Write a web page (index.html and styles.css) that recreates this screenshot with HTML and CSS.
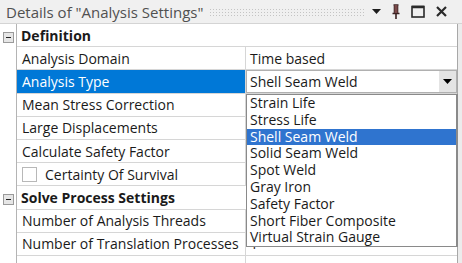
FILE: index.html
```html
<!DOCTYPE html>
<html lang="en">
<head>
  <meta charset="UTF-8">
  <title>Details of "Analysis Settings"</title>
  <link rel="stylesheet" href="styles.css">
</head>
<body>

  <div class="details-panel">
    <div class="title-bar">
      <span class="title">Details of "Analysis Settings"</span>
      <span class="grip"></span>
      <span class="tool-icons">
        <svg width="9" height="6" viewBox="0 0 9 6"><path d="M0 0 H9 L4.5 5 Z" fill="#1e1e1e"/></svg>
        <svg width="8" height="15" viewBox="0 0 8 15"><path d="M1.5 1 H6.5 M2.5 1 V9 M5.5 1 V9 M0.5 9.5 H7.5 M4 10 V15" stroke="#3a2222" stroke-width="1.6" fill="none"/><rect x="2.5" y="1" width="3" height="8" fill="#7a4a4a"/></svg>
        <svg width="14" height="13" viewBox="0 0 14 13"><rect x="1" y="1.5" width="12" height="10.5" fill="none" stroke="#2a2a2a" stroke-width="1.6"/><path d="M1 2 H13" stroke="#2a2a2a" stroke-width="2.5"/></svg>
        <svg width="11" height="11" viewBox="0 0 11 11"><path d="M1 1 L10 10 M10 1 L1 10" stroke="#2a2a2a" stroke-width="2.2"/></svg>
      </span>
    </div>

    <div class="grid">
      <div class="row category">
        <span class="gutter"><span class="toggle"></span></span>
        <span class="cell wide">Definition</span>
      </div>
      <div class="row">
        <span class="gutter"></span>
        <span class="cell name">Analysis Domain</span>
        <span class="cell value">Time based</span>
      </div>
      <div class="row selected">
        <span class="gutter"></span>
        <span class="cell name">Analysis Type</span>
        <span class="cell value">
          <span class="combo">
            <span class="combo-text">Shell Seam Weld</span>
            <span class="combo-button"><svg width="9" height="5" viewBox="0 0 9 5"><path d="M0 0 H9 L4.5 5 Z" fill="#000"/></svg></span>
          </span>
        </span>
      </div>
      <div class="row">
        <span class="gutter"></span>
        <span class="cell name">Mean Stress Correction</span>
        <span class="cell value"></span>
      </div>
      <div class="row">
        <span class="gutter"></span>
        <span class="cell name">Large Displacements</span>
        <span class="cell value"></span>
      </div>
      <div class="row">
        <span class="gutter"></span>
        <span class="cell name">Calculate Safety Factor</span>
        <span class="cell value"></span>
      </div>
      <div class="row">
        <span class="gutter"></span>
        <span class="cell name"><span class="checkbox"></span>Certainty Of Survival</span>
        <span class="cell value"></span>
      </div>
      <div class="row category">
        <span class="gutter"><span class="toggle"></span></span>
        <span class="cell wide">Solve Process Settings</span>
      </div>
      <div class="row">
        <span class="gutter"></span>
        <span class="cell name">Number of Analysis Threads</span>
        <span class="cell value"></span>
      </div>
      <div class="row">
        <span class="gutter"></span>
        <span class="cell name">Number of Translation Processes</span>
        <span class="cell value">1</span>
      </div>
      <div class="row">
        <span class="gutter"></span>
        <span class="cell name"></span>
        <span class="cell value"></span>
      </div>
    </div>

    <!-- lista aberta do combo -->
    <ul class="dropdown-list">
      <li>Strain Life</li>
      <li>Stress Life</li>
      <li class="active">Shell Seam Weld</li>
      <li>Solid Seam Weld</li>
      <li>Spot Weld</li>
      <li>Gray Iron</li>
      <li>Safety Factor</li>
      <li>Short Fiber Composite</li>
      <li>Virtual Strain Gauge</li>
    </ul>
  </div>

</body>
</html>
```

FILE: styles.css
```css
body {
  margin: 0;
  font-family: "Open Sans", "Noto Sans", sans-serif;
  font-size: 14px;
  color: #1a1a1a;
  background-color: #fff;
  overflow: hidden;
}

.details-panel {
  position: relative;
  width: 462px;
  height: 263px;
  overflow: hidden;
  background-color: #ececec;
}

.title-bar {
  display: flex;
  align-items: center;
  height: 23px;
  padding-left: 6px;
  background-color: #f0f0f0;
  border-bottom: 1px solid #d4d4d4;
  color: #505050;
}

.title {
  font-size: 15px;
}

.grip {
  flex: 1;
  height: 8px;
  margin: 0 6px 0 6px;
  background-image: radial-gradient(circle, #c4c4c4 0.7px, transparent 1px);
  background-size: 3px 3px;
}

.tool-icons {
  display: flex;
  align-items: center;
  gap: 11px;
  width: 84px;
  padding-right: 6px;
}

.grid {
  width: 457px;
  border-right: 1px solid #a8a8a8;
  background-color: #fff;
}

.row {
  display: grid;
  grid-template-columns: 17px 229px 1fr;
  height: 23.2px;
}

.gutter {
  position: relative;
  background-color: #fff;
  border-right: 1px solid #b4b4b4;
}

.cell {
  display: flex;
  align-items: center;
  padding-left: 5px;
  border-bottom: 1px solid #d6d6d6;
  white-space: nowrap;
  overflow: hidden;
}

.cell.name {
  border-right: 1px solid #d6d6d6;
}

.cell.value {
  padding-left: 4px;
}

.cell.wide {
  grid-column: 2 / 4;
  font-weight: bold;
  padding-left: 4px;
}

.toggle {
  position: absolute;
  left: 3px;
  top: 8px;
  width: 9px;
  height: 9px;
  border: 1px solid #9a9a9a;
  background-color: #e6e6e6;
}

.toggle::after {
  content: "";
  position: absolute;
  left: 2px;
  top: 4px;
  width: 5px;
  height: 1px;
  background-color: #222;
}

.row.selected .cell.name {
  background-color: #0078d7;
  color: #fff;
}

.row.selected .cell.value {
  padding: 0;
}

.combo {
  display: flex;
  align-items: center;
  width: 100%;
  height: 100%;
  border: 1px solid #b0b0b0;
  box-sizing: border-box;
}

.combo-text {
  flex: 1;
  padding-left: 3px;
}

.combo-button {
  display: flex;
  align-items: center;
  justify-content: center;
  width: 17px;
  height: 100%;
  background-color: #e4e4e4;
}

.checkbox {
  width: 13px;
  height: 13px;
  margin: 0 8px 0 0;
  border: 1px solid #b8b8b8;
  background-color: #fff;
}

.dropdown-list {
  position: absolute;
  left: 246px;
  top: 94px;
  width: 209px;
  margin: 0;
  padding: 0;
  list-style: none;
  background-color: #fff;
  border: 1px solid #8a8a8a;
  border-right-width: 2px;
}

.dropdown-list li {
  height: 16.8px;
  line-height: 16.8px;
  padding-left: 3px;
  white-space: nowrap;
}

.dropdown-list li.active {
  background-color: #2f74cf;
  color: #fff;
}
```
